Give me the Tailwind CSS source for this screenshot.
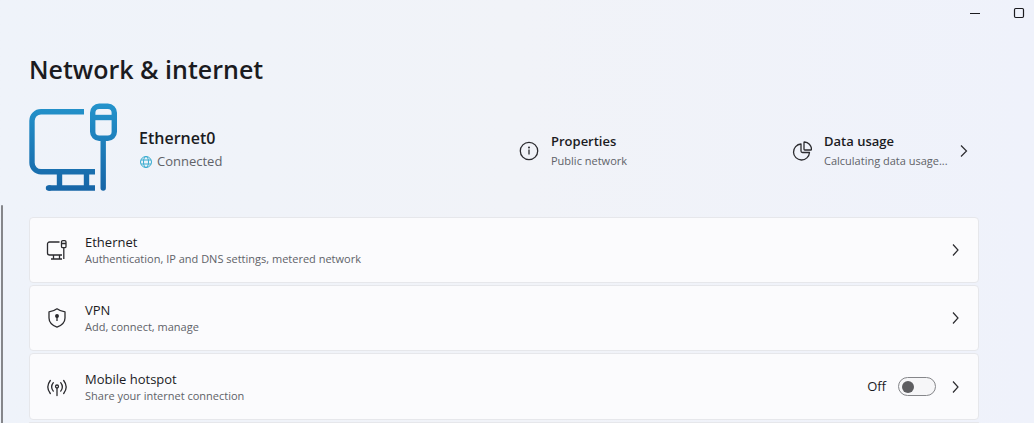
<!DOCTYPE html>
<html lang="en">
<head>
<meta charset="utf-8">
<meta name="viewport" content="width=device-width, initial-scale=1">
<title>Network &amp; internet</title>
<script src="https://cdn.jsdelivr.net/npm/@tailwindcss/browser@4"></script>
</head>
<body class="h-screen overflow-hidden bg-linear-to-r from-[#eff3fa] via-[#f1f3f8] to-[#eff2fb] font-['Open_Sans','Noto_Sans',sans-serif] text-[#1b1b1f]">
<div class="flex h-full">
  <aside class="flex w-1 shrink-0 flex-col pt-[205px] pl-px" aria-hidden="true">
    <div class="w-0.5 grow rounded-t-full bg-[#85868a]"></div>
  </aside>
  <div class="flex min-w-0 grow flex-col">
    <header class="-mr-[7px] flex h-[26px] shrink-0 justify-end">
      <button type="button" aria-label="Minimize" class="flex w-11 items-center justify-center">
        <svg class="size-3" viewBox="0 0 12 12" stroke="#1b1b1f" fill="none"><path d="M1 6.5h10"/></svg>
      </button>
      <button type="button" aria-label="Maximize" class="flex w-11 items-center justify-center">
        <svg class="size-3" viewBox="0 0 12 12" stroke="#1b1b1f" stroke-width="1.2" fill="none"><rect x="1.5" y="1.5" width="9" height="9" rx="1.2"/></svg>
      </button>
    </header>
    <main class="flex grow flex-col pt-6 pr-[55px] pl-[25px]">
      <h1 class="text-[25px] leading-[38px] font-semibold">Network &amp; internet</h1>

      <section class="mt-3.5 flex h-[90px] items-center">
        <div class="flex grow items-center">
          <svg class="h-[90px] w-[90px] shrink-0" viewBox="0 0 90 90" fill="none" stroke="url(#blue)" stroke-width="5.4" aria-hidden="true">
            <defs><linearGradient id="blue" gradientUnits="userSpaceOnUse" x1="0" y1="0" x2="0" y2="90"><stop stop-color="#2494cc"/><stop offset="1" stop-color="#1664a6"/></linearGradient></defs>
            <path d="M55 9.700H12a9 9 0 0 0-9 9v42a9 9 0 0 0 9 9h54"/>
            <path d="M19.500 86H66" /><path d="M30.500 69v17M57.500 69v17"/>
            <path d="M19.500 86h1" stroke-linecap="round"/>
            <rect x="63.700" y="4.200" width="21.600" height="32" rx="6.500"/>
            <path d="M63.700 15.500h21.600"/>
            <path d="M74.200 37v49" stroke-linecap="round"/>
          </svg>
          <div class="ml-5 pt-1.5">
            <h2 class="text-base leading-6 font-semibold">Ethernet0</h2>
            <p class="flex h-6 items-center gap-1 text-[13px] text-[#606268]">
              <svg class="size-[14px]" viewBox="0 0 14 14" fill="none" stroke="#38acd0" aria-hidden="true"><circle cx="7" cy="7" r="5.500"/><ellipse cx="7" cy="7" rx="2.500" ry="5.500"/><path d="M2 5h10M2 9h10"/></svg>
              Connected
            </p>
          </div>
        </div>
        <a href="#properties" class="flex w-[273px] shrink-0 items-center gap-3 pt-2">
          <svg class="size-5 shrink-0" viewBox="0 0 20 20" fill="none" stroke="#2b2b2f" stroke-width="1.300" aria-hidden="true"><circle cx="10" cy="10" r="8.700"/><path d="M10 8.500v5"/><circle cx="10" cy="6.500" r=".4" fill="#2b2b2f"/></svg>
          <span class="flex flex-col">
            <span class="text-[13px] leading-5 font-semibold">Properties</span>
            <span class="text-[11px] leading-5 text-[#606268]">Public network</span>
          </span>
        </a>
        <a href="#data-usage" class="flex w-[187px] shrink-0 items-center pt-2">
          <svg class="mr-3 size-5 shrink-0" viewBox="0 0 20 20" fill="none" stroke="#2b2b2f" stroke-width="1.300" stroke-linejoin="round" aria-hidden="true"><path d="M9 3a8 8 0 1 0 8.500 8.500h-7a1.500 1.500 0 0 1-1.500-1.500z"/><path d="M12 1.500q0-.5.500-.5a7.500 7.500 0 0 1 7 7.200q0 .8-.6.800h-6.200q-.7 0-.7-.7z"/></svg>
          <span class="flex flex-col whitespace-nowrap">
            <span class="text-[13px] leading-5 font-semibold">Data usage</span>
            <span class="text-[11px] leading-5 text-[#606268]">Calculating data usage...</span>
          </span>
          <svg class="mr-2 ml-auto size-3.5 shrink-0" viewBox="0 0 14 14" fill="none" stroke="#2b2b2f" stroke-width="1.200" aria-hidden="true"><path d="m4 1.500 5.500 5.500L4 12.500"/></svg>
        </a>
      </section>

      <ul class="mt-[25px] flex grow flex-col gap-0.5">
        <li class="flex h-[66px] shrink-0 items-center rounded border border-[#e6e7eb] bg-[#fbfbfd] px-4">
          <a href="#ethernet" class="flex grow items-center gap-[17px]">
            <svg class="size-[22px]" viewBox="0 0 22 22" fill="none" stroke="#2b2b2f" stroke-width="1.300" aria-hidden="true"><path d="M13.500 3H3.500a2 2 0 0 0-2 2v9a2 2 0 0 0 2 2h12.500M5 20h11M7.500 16v4M13.500 16v4"/><rect x="15.500" y="1.700" width="4.500" height="7" rx="1.300"/><path d="M15.500 4.500H20M17.800 9v11" /></svg>
            <span class="flex flex-col">
              <span class="text-[13px] leading-[18px]">Ethernet</span>
              <span class="text-[11px] leading-4 text-[#606268]">Authentication, IP and DNS settings, metered network</span>
            </span>
            <svg class="ml-auto size-3.5" viewBox="0 0 14 14" fill="none" stroke="#2b2b2f" stroke-width="1.200" aria-hidden="true"><path d="m5 1.500 5 5.500-5 5.500"/></svg>
          </a>
        </li>
        <li class="flex h-[66px] shrink-0 items-center rounded border border-[#e6e7eb] bg-[#fbfbfd] px-4">
          <a href="#vpn" class="flex grow items-center gap-[17px]">
            <svg class="size-[22px]" viewBox="0 0 22 22" fill="none" stroke="#2b2b2f" stroke-width="1.300" stroke-linejoin="round" aria-hidden="true"><path d="M11 1.800Q14.500 4.500 19 4.800V11q0 6-8 9.200Q3 17 3 11V4.800Q7.500 4.500 11 1.800z"/><circle cx="11" cy="9" r="1.300" fill="#2b2b2f"/><path d="M11 9v5"/></svg>
            <span class="flex flex-col">
              <span class="text-[13px] leading-[18px]">VPN</span>
              <span class="text-[11px] leading-4 text-[#606268]">Add, connect, manage</span>
            </span>
            <svg class="ml-auto size-3.5" viewBox="0 0 14 14" fill="none" stroke="#2b2b2f" stroke-width="1.200" aria-hidden="true"><path d="m5 1.500 5 5.500-5 5.500"/></svg>
          </a>
        </li>
        <li class="flex h-[67px] shrink-0 items-center rounded border border-[#e6e7eb] bg-[#fbfbfd] px-4">
          <a href="#hotspot" class="flex grow items-center gap-[17px]">
            <svg class="size-[22px]" viewBox="0 0 22 22" fill="none" stroke="#2b2b2f" stroke-width="1.300" stroke-linecap="round" aria-hidden="true"><path d="M4.300 4.500q-5 6.500 0 13M17.700 4.500q5 6.500 0 13M7.300 6.700q-3.300 4.200 0 8.400M14.700 6.700q3.300 4.200 0 8.400M11 12v7.500"/><circle cx="11" cy="10.500" r="1.500"/></svg>
            <span class="flex flex-col">
              <span class="text-[13px] leading-[18px]">Mobile hotspot</span>
              <span class="text-[11px] leading-4 text-[#606268]">Share your internet connection</span>
            </span>
          </a>
          <label class="flex items-center gap-3 text-[13px]">
            Off
            <input type="checkbox" role="switch" class="flex h-[19px] w-[38px] appearance-none items-center rounded-full border border-[#85868a] bg-[#f6f6f8] pl-[3px] before:size-3 before:rounded-full before:bg-[#5d5d60] checked:justify-end checked:pr-[3px]">
          </label>
          <a href="#hotspot" aria-label="Mobile hotspot settings" class="ml-3">
            <svg class="size-3.5" viewBox="0 0 14 14" fill="none" stroke="#2b2b2f" stroke-width="1.200" aria-hidden="true"><path d="m5 1.500 5 5.500-5 5.500"/></svg>
          </a>
        </li>
        <li class="grow rounded-t border-x border-t border-[#e6e7eb] bg-[#fbfbfd]" aria-hidden="true"></li>
      </ul>
    </main>
  </div>
</div>
</body>
</html>
